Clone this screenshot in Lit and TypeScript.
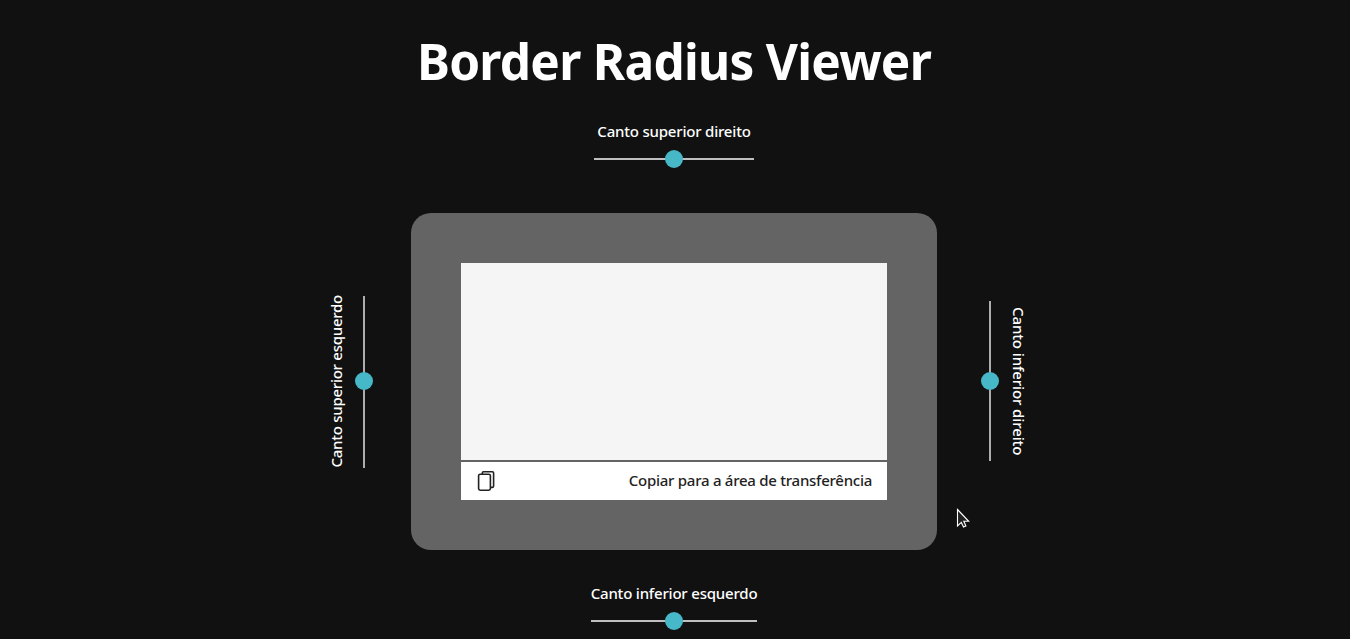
import { LitElement, html, css } from "lit";
import { customElement, property } from "lit/decorators.js";

@customElement("corner-slider")
export class CornerSlider extends LitElement {
  @property() label = "";
  @property({ reflect: true }) side = "top";

  static styles = css`
    :host { display: flex; flex-direction: column; align-items: center; }
    .label {
      font: 500 15px/20px "Noto Sans", "Open Sans", sans-serif;
      letter-spacing: -0.2px;
      color: #fff; white-space: nowrap; text-align: center;
    }
    .slider { display: grid; place-items: center; width: 100%; height: 18px; margin-top: 9px; }
    .track, .thumb { grid-area: 1 / 1; }
    .track { width: 100%; height: 2px; background: #c0bfc0; }
    .thumb { width: 18px; height: 18px; border-radius: 50%; background: #47b8c8; }
    :host([side="top"]) { width: 160px; }
    :host([side="bottom"]) { width: 166px; }
    :host([side="left"]), :host([side="right"]) { flex-direction: row; }
    :host([side="left"]) .label { writing-mode: vertical-rl; transform: rotate(180deg); width: 20px; letter-spacing: -0.26px; }
    :host([side="right"]) .label { writing-mode: vertical-rl; width: 20px; letter-spacing: -0.1px; }
    :host([side="right"]) { flex-direction: row-reverse; height: 160px; }
    :host([side="left"]) { height: 172px; }
    :host([side="left"]) .slider, :host([side="right"]) .slider { width: 18px; height: 100%; margin: 0; }
    :host([side="left"]) .slider { margin-left: 9px; }
    :host([side="right"]) .slider { margin-right: 10px; }
    :host([side="left"]) .track, :host([side="right"]) .track { width: 2px; height: 100%; background: #adadad; }
    :host([side="left"]) .thumb { margin-bottom: 2px; }
  `;

  render() {
    return html`
      <span class="label">${this.label}</span>
      <div class="slider" role="slider" aria-label=${this.label}>
        <div class="track"></div>
        <div class="thumb"></div>
      </div>
    `;
  }
}

@customElement("app-root")
export class AppRoot extends LitElement {
  static styles = css`
    :host {
      display: flex; flex-direction: column; align-items: center;
      box-sizing: border-box; width: 100%; height: 639px; padding-right: 2px;
      overflow: hidden; background: #111;
      font-family: "Noto Sans", "Open Sans", sans-serif;
    }
    .title { margin: 31px 0 0; height: 60px; font-size: 49.5px; line-height: 60px; font-weight: 700; letter-spacing: -0.72px; color: #fff; white-space: nowrap; }
    .top { margin-top: 30px; }
    .middle { display: flex; align-items: center; align-self: stretch; padding-left: 326px; margin-top: 45px; height: 337px; }
    .panel {
      box-sizing: border-box; width: 526px; height: 337px; padding: 50px; border-radius: 20px;
      margin: 0 44px 0 38px; background: #646464; display: flex; flex-direction: column; gap: 2px;
    }
    .preview { height: 197px; background: #f5f5f5; }
    .copy {
      display: flex; align-items: center; justify-content: space-between;
      box-sizing: border-box; height: 38px; padding: 0 15px 0 16px; background: #fff;
      color: #222; font-size: 15px; font-weight: 500; line-height: 20px; white-space: nowrap;
    }
    .copytext { letter-spacing: -0.26px; padding-bottom: 2px; }
    .right { margin-bottom: 1px; }
    .bottom { margin-top: 33px; }
    .cursor { position: absolute; left: 956px; top: 508px; }
  `;

  render() {
    return html`
      <h1 class="title">Border Radius Viewer</h1>
      <corner-slider class="top" side="top" label="Canto superior direito"></corner-slider>
      <div class="middle">
        <corner-slider side="left" label="Canto superior esquerdo"></corner-slider>
        <div class="panel">
          <div class="preview"></div>
          <div class="copy">
            <svg width="20" height="22" viewBox="0 0 20 22" fill="none" stroke="#222" stroke-width="1.6">
              <path d="M5.3 4V3Q5.3 1.8 6.5 1.8H15.3Q16.6 1.8 16.6 3.1V16Q16.6 17.4 15.2 17.4H13.5" />
              <rect x="1.6" y="4.2" width="11.8" height="16" rx="1.6" />
            </svg>
            <span class="copytext">Copiar para a área de transferência</span>
          </div>
        </div>
        <corner-slider class="right" side="right" label="Canto inferior direito"></corner-slider>
      </div>
      <corner-slider class="bottom" side="bottom" label="Canto inferior esquerdo"></corner-slider>
      <svg class="cursor" width="15" height="22" viewBox="0 0 15 22">
        <path d="M1.5 1.5V18L5.3 14.4L7.5 19L9.9 17.9L7.8 13.3H12.7Z" fill="#222" stroke="#fff" stroke-width="1.1" />
      </svg>
    `;
  }
}
